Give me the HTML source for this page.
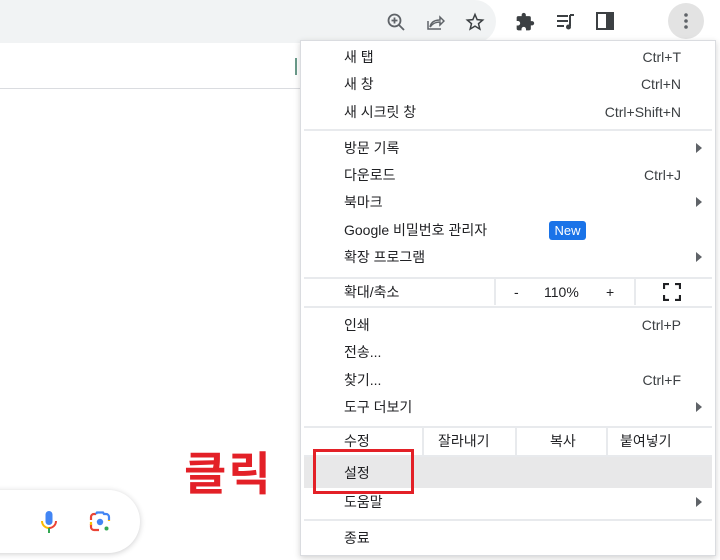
<!DOCTYPE html>
<html><head><meta charset="utf-8"><style>
*{margin:0;padding:0;box-sizing:border-box}
body{width:720px;height:560px;background:#fff;position:relative;overflow:hidden;font-family:"Liberation Sans","Noto Sans CJK KR",sans-serif;color:#202124}
.omni{position:absolute;left:-30px;top:0;width:526px;height:43px;background:#f1f3f4;border-radius:0 22px 22px 0}
.ico{position:absolute}
.menu{position:absolute;left:300px;top:40px;width:416px;height:516px;background:#fff;border:1px solid #dadce0;box-shadow:0 2px 6px rgba(0,0,0,.18)}
.it{position:absolute;left:43px;font-size:14px;line-height:20px;white-space:nowrap}
.sc{position:absolute;right:34px;font-size:14px;line-height:20px;color:#3c4043}
.ar{position:absolute;right:13px;width:0;height:0;border-left:6px solid #5f6368;border-top:5px solid transparent;border-bottom:5px solid transparent}
.sep{position:absolute;left:3px;right:3px;height:2px;background:#e8eaed}
.vs{position:absolute;width:2px;background:#e8eaed}
</style></head><body>
<div class="omni"></div>
<svg class="ico" style="left:386px;top:12px" width="20" height="20" viewBox="0 0 20 20"><circle cx="8.5" cy="8.5" r="6" fill="none" stroke="#5f6368" stroke-width="1.8"/><path d="M13 13l5 5M5.5 8.5h6M8.5 5.5v6" stroke="#5f6368" stroke-width="1.8"/></svg>
<svg class="ico" style="left:425px;top:12px" width="20" height="20" viewBox="0 0 20 20"><path d="M3 9v8h13M5 15c1-5 5-7 10-7V5l4 4-4 4v-3c-4 0-7 1-10 5" fill="none" stroke="#5f6368" stroke-width="1.5"/></svg>
<svg class="ico" style="left:465px;top:12px" width="20" height="20" viewBox="0 0 24 24"><path d="M12 3l2.6 6.2 6.6.5-5 4.3 1.6 6.5L12 17l-5.8 3.5 1.6-6.5-5-4.3 6.6-.5z" fill="none" stroke="#3c4043" stroke-width="1.8"/></svg>
<svg class="ico" style="left:515px;top:12px" width="20" height="20" viewBox="0 0 24 24"><path d="M20.5 11H19V7a2 2 0 0 0-2-2h-4V3.5a2.5 2.5 0 0 0-5 0V5H4a2 2 0 0 0-2 2v3.8h1.5a2.7 2.7 0 0 1 0 5.4H2V20a2 2 0 0 0 2 2h3.8v-1.5a2.7 2.7 0 0 1 5.4 0V22H17a2 2 0 0 0 2-2v-4h1.5a2.5 2.5 0 0 0 0-5z" fill="#3c4043"/></svg>
<svg class="ico" style="left:555px;top:12px" width="20" height="20" viewBox="0 0 20 20"><path d="M2 4h11M2 9h11M2 14h7" stroke="#3c4043" stroke-width="2"/><path d="M15 3v11" stroke="#3c4043" stroke-width="2"/><circle cx="13.5" cy="15" r="2.5" fill="#3c4043"/><path d="M15 3h4" stroke="#3c4043" stroke-width="2"/></svg>
<svg class="ico" style="left:595px;top:11px" width="20" height="20" viewBox="0 0 20 20"><rect x="2" y="2" width="16" height="16" fill="none" stroke="#3c4043" stroke-width="2"/><rect x="11" y="2" width="7" height="16" fill="#3c4043"/></svg>
<div style="position:absolute;left:668px;top:3px;width:36px;height:36px;border-radius:50%;background:#e3e3e3"></div>
<svg class="ico" style="left:676px;top:11px" width="20" height="20" viewBox="0 0 20 20"><circle cx="10" cy="4" r="1.8" fill="#5f6368"/><circle cx="10" cy="10" r="1.8" fill="#5f6368"/><circle cx="10" cy="16" r="1.8" fill="#5f6368"/></svg>
<div style="position:absolute;left:0;top:88px;width:300px;height:1px;background:#dadce0"></div>
<div style="position:absolute;left:295px;top:58px;width:2px;height:17px;background:#6a9a8a"></div>

<div style="position:absolute;left:-40px;top:490px;width:180px;height:63px;background:#fff;border-radius:32px;box-shadow:0 1px 6px rgba(32,33,36,.22)"></div>
<svg class="ico" style="left:38px;top:510px" width="22" height="26" viewBox="0 0 22 26"><rect x="7.5" y="1" width="7" height="14" rx="3.5" fill="#4285f4"/><path d="M4 11a7 7 0 0 0 7 7" fill="none" stroke="#fbbc04" stroke-width="2"/><path d="M18 11a7 7 0 0 1-7 7" fill="none" stroke="#ea4335" stroke-width="2"/><path d="M11 18v5" stroke="#34a853" stroke-width="2"/></svg>
<svg class="ico" style="left:88px;top:510px" width="24" height="24" viewBox="0 0 24 24"><path d="M3 10V7a3 3 0 0 1 3-3h2" fill="none" stroke="#ea4335" stroke-width="2.2"/><path d="M8 4l1-1.5h6L16 4h2a3 3 0 0 1 3 3v3" fill="none" stroke="#4285f4" stroke-width="2.2"/><path d="M21 10v1" stroke="#fbbc04" stroke-width="2.2"/><path d="M3 14v3a3 3 0 0 0 3 3h5" fill="none" stroke="#ea4335" stroke-width="2.2"/><path d="M3 12v3" stroke="#fbbc04" stroke-width="2.2"/><circle cx="12" cy="12" r="3.2" fill="#4285f4"/><circle cx="18.5" cy="18.5" r="2" fill="#34a853"/></svg>

<div style="position:absolute;left:184px;top:446px;font-size:46px;font-weight:bold;color:#e32027;line-height:56px;letter-spacing:2px">클릭</div>

<div class="menu">
<div class="it" style="top:6px">새 탭</div><div class="sc" style="top:6px">Ctrl+T</div>
<div class="it" style="top:33px">새 창</div><div class="sc" style="top:33px">Ctrl+N</div>
<div class="it" style="top:61px">새 시크릿 창</div><div class="sc" style="top:61px">Ctrl+Shift+N</div>
<div class="sep" style="top:88px"></div>
<div class="it" style="top:97px">방문 기록</div><div class="ar" style="top:102px"></div>
<div class="it" style="top:124px">다운로드</div><div class="sc" style="top:124px">Ctrl+J</div>
<div class="it" style="top:151px">북마크</div><div class="ar" style="top:156px"></div>
<div class="it" style="top:179px">Google 비밀번호 관리자</div>
<div style="position:absolute;left:248px;top:180px;width:37px;height:19px;background:#1a73e8;color:#fff;font-size:13px;line-height:19px;text-align:center;border-radius:3px">New</div>
<div class="it" style="top:206px">확장 프로그램</div><div class="ar" style="top:211px"></div>
<div class="sep" style="top:236px"></div>
<div class="it" style="top:241px">확대/축소</div>
<div class="vs" style="left:193px;top:238px;height:26px"></div>
<div class="it" style="left:213px;top:241px">-</div>
<div class="it" style="left:243px;top:241px">110%</div>
<div class="it" style="left:305px;top:241px">+</div>
<div class="vs" style="left:333px;top:238px;height:26px"></div>
<svg class="ico" style="left:362px;top:242px" width="18" height="18" viewBox="0 0 18 18"><path d="M1 6V1h5M12 1h5v5M17 12v5h-5M6 17H1v-5" fill="none" stroke="#202124" stroke-width="2.2"/></svg>
<div class="sep" style="top:265px"></div>
<div class="it" style="top:274px">인쇄</div><div class="sc" style="top:274px">Ctrl+P</div>
<div class="it" style="top:301px">전송...</div>
<div class="it" style="top:329px">찾기...</div><div class="sc" style="top:329px">Ctrl+F</div>
<div class="it" style="top:356px">도구 더보기</div><div class="ar" style="top:361px"></div>
<div class="sep" style="top:385px"></div>
<div class="it" style="top:390px">수정</div>
<div class="vs" style="left:121px;top:387px;height:27px"></div>
<div class="it" style="left:137px;top:390px">잘라내기</div>
<div class="vs" style="left:214px;top:387px;height:27px"></div>
<div class="it" style="left:249px;top:390px">복사</div>
<div class="vs" style="left:305px;top:387px;height:27px"></div>
<div class="it" style="left:319px;top:390px">붙여넣기</div>
<div class="sep" style="top:414px"></div>
<div style="position:absolute;left:3px;right:3px;top:416px;height:31px;background:#e8e8e9"></div>
<div class="it" style="top:422px">설정</div>
<div class="it" style="top:451px">도움말</div><div class="ar" style="top:456px"></div>
<div class="sep" style="top:478px"></div>
<div class="it" style="top:487px">종료</div>
</div>
<div style="position:absolute;left:313px;top:449px;width:101px;height:45px;border:3.5px solid #e32027"></div>
</body></html>
